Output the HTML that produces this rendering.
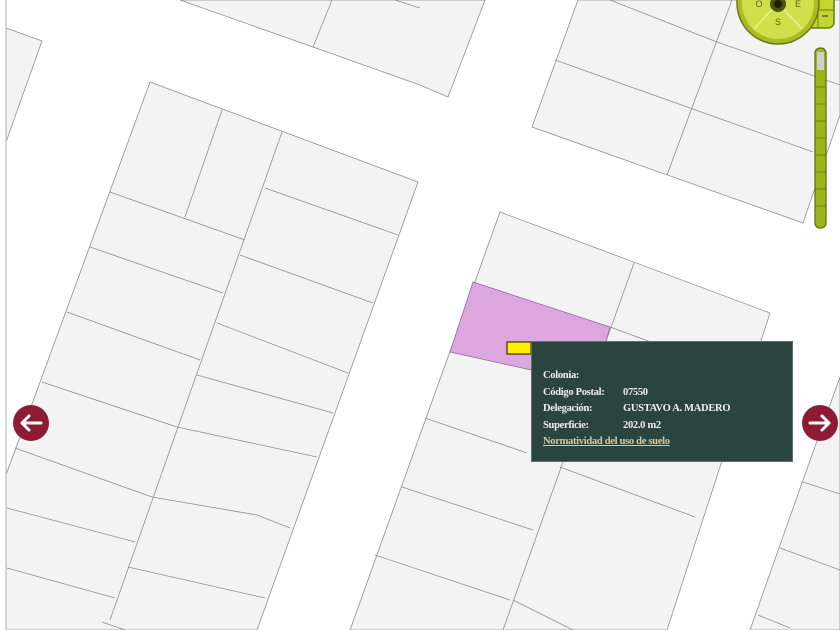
<!DOCTYPE html>
<html><head><meta charset="utf-8"><style>
html,body{margin:0;padding:0;background:#fff;}
#w{position:relative;width:840px;height:630px;overflow:hidden;background:#fff;}
svg{position:absolute;left:0;top:0;}
#tip{position:absolute;left:531px;top:341px;width:262px;height:121px;background:#2a4540;border:1px solid #5f716c;box-sizing:border-box;font-family:"Liberation Serif",serif;font-weight:bold;font-size:10.5px;color:#f0f0f0;letter-spacing:-0.3px;white-space:nowrap;}
#tip div{position:absolute;left:11px;white-space:nowrap;}
#tip span{position:absolute;left:80px;white-space:nowrap;}
#tip a{color:#d8c9a0;text-decoration:underline;}
</style></head><body><div id="w">
<svg width="840" height="630" viewBox="0 0 840 630">
<g fill="#f3f3f3" stroke="#8f8f8f" stroke-width="0.8">
<polygon points="180,0 485,0 448,97 420,85 313,47"/>
<polygon points="6,28 42,41 6,142"/>
<polygon points="150,82 418,182 257,630 6,630 6,475"/>
<polygon points="500,212 770,313 667,630 350,630"/>
<polygon points="578,0 840,0 840,115 803,223 532,127"/>
<polygon points="840,377 803,480 750,630 840,630"/>
</g>
<polygon points="473,282 610,327 594,384 450,352" fill="#dca6de" stroke="#8e6c8f" stroke-width="0.8"/>
<g stroke="#8f8f8f" stroke-width="0.8" fill="none">
<line x1="332" y1="0" x2="313" y2="47"/><line x1="395" y1="0" x2="420" y2="8"/>
<line x1="222" y1="110" x2="185" y2="217"/>
<line x1="282" y1="132" x2="110" y2="620"/>
<line x1="110" y1="192" x2="245" y2="240"/>
<line x1="90" y1="247" x2="223" y2="293"/>
<line x1="67" y1="312" x2="200" y2="360"/>
<line x1="42" y1="382" x2="177" y2="427"/>
<line x1="15" y1="448" x2="152" y2="497"/>
<line x1="7" y1="508" x2="135" y2="542"/>
<line x1="7" y1="568" x2="115" y2="598"/>
<line x1="265" y1="188" x2="398" y2="235"/>
<line x1="240" y1="255" x2="373" y2="303"/>
<line x1="217" y1="323" x2="348" y2="373"/>
<line x1="197" y1="375" x2="333" y2="413"/>
<line x1="177" y1="427" x2="317" y2="457"/>
<polyline points="152,497 257,515 290,528"/>
<line x1="128" y1="567" x2="265" y2="598"/>
<line x1="102" y1="622" x2="125" y2="630"/>
<line x1="634" y1="263" x2="503" y2="630"/>
<line x1="425" y1="418" x2="527" y2="453"/>
<line x1="402" y1="487" x2="533" y2="530"/>
<line x1="375" y1="555" x2="510" y2="600"/>
<line x1="560" y1="467" x2="695" y2="517"/>
<line x1="513" y1="600" x2="573" y2="630"/>
<line x1="610" y1="327" x2="700" y2="360"/>
<line x1="803" y1="482" x2="840" y2="494"/>
<line x1="780" y1="548" x2="840" y2="570"/>
<line x1="758" y1="615" x2="790" y2="628"/>
<polyline points="555,60 690,108 813,152"/>
<polyline points="610,0 717,42 840,85"/>
<line x1="732" y1="0" x2="667" y2="175"/>
</g>
<line x1="6" y1="0" x2="6" y2="630" stroke="#bdbdbd" stroke-width="1.2"/>
<rect x="768" y="-6" width="66" height="34" rx="6" fill="#c2d530" stroke="#6d7a12" stroke-width="1.5"/>
<line x1="818" y1="0" x2="818" y2="28" stroke="#6d7a12"/>
<line x1="819" y1="10" x2="833" y2="10" stroke="#6d7a12"/>
<line x1="822" y1="16" x2="828" y2="16" stroke="#445" stroke-width="1.2"/>
<circle cx="778" cy="3" r="41" fill="#a9bc22" stroke="#6d7a12" stroke-width="1.5"/>
<circle cx="778" cy="3" r="36" fill="#cfe04a"/>
<g stroke="#eef5b0" stroke-width="1"><line x1="778" y1="3" x2="754" y2="29"/><line x1="778" y1="3" x2="802" y2="29"/></g>
<circle cx="778" cy="4" r="8" fill="#4a5310"/><circle cx="778" cy="4" r="4" fill="#1d2205"/>
<g font-family="Liberation Sans,sans-serif" font-size="9" fill="#5a6515" text-anchor="middle"><text x="759" y="7">O</text><text x="798" y="7">E</text><text x="778" y="25">S</text></g>
<rect x="815" y="48" width="11" height="180" rx="5" fill="#9cb51a" stroke="#5d6b0f" stroke-width="1.2"/>
<rect x="817" y="52" width="7" height="18" fill="#cfd0c8"/>
<g stroke="#5d6b0f" stroke-width="0.7">
<line x1="815" y1="87" x2="826" y2="87"/><line x1="815" y1="104" x2="826" y2="104"/><line x1="815" y1="121" x2="826" y2="121"/><line x1="815" y1="138" x2="826" y2="138"/><line x1="815" y1="155" x2="826" y2="155"/><line x1="815" y1="172" x2="826" y2="172"/><line x1="815" y1="189" x2="826" y2="189"/><line x1="815" y1="206" x2="826" y2="206"/>
</g>
<circle cx="31" cy="423" r="18" fill="#8e1b34"/>
<path d="M41 423 H23 M29 416 L22 423 L29 430" stroke="#fff" stroke-width="3" fill="none" stroke-linecap="round" stroke-linejoin="round"/>
<circle cx="820" cy="423" r="18" fill="#8e1b34"/>
<path d="M810 423 H828 M822 416 L829 423 L822 430" stroke="#fff" stroke-width="3" fill="none" stroke-linecap="round" stroke-linejoin="round"/>
<rect x="507" y="342" width="24" height="12" fill="#ffee00" stroke="#3a3200" stroke-width="1.2"/>
</svg>
<div id="tip">
<div style="top:28px">Colonia:</div>
<div style="top:45px">Código Postal:<span>07550</span></div>
<div style="top:61px">Delegación:<span>GUSTAVO A. MADERO</span></div>
<div style="top:78px">Superficie:<span>202.0 m2</span></div>
<div style="top:94px"><a>Normatividad del uso de suelo</a></div>
</div>
</div></body></html>
